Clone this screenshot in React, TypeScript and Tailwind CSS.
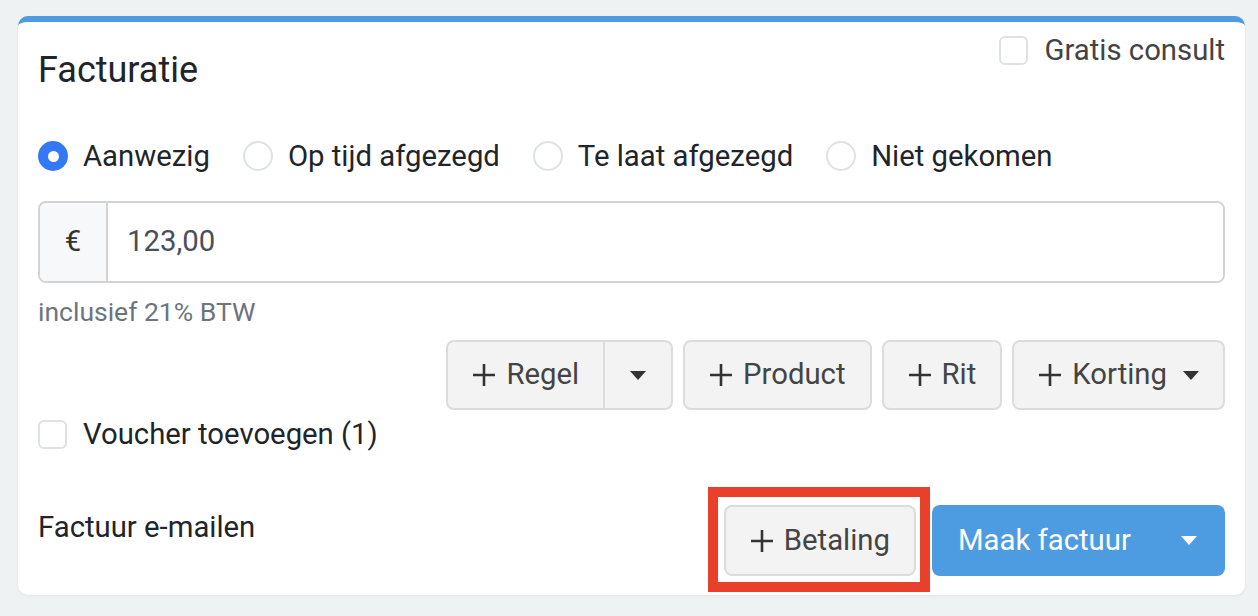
import { useState } from 'react';

const options = ['Aanwezig', 'Op tijd afgezegd', 'Te laat afgezegd', 'Niet gekomen'];

function PlusIcon() {
  return (
    <svg width="24" height="24" viewBox="0 0 24 24" className="shrink-0">
      <path d="M12 1v22M1 12h22" stroke="#333" strokeWidth="2.6" />
    </svg>
  );
}

function Caret({ color = '#333' }: { color?: string }) {
  return (
    <svg width="16" height="9" viewBox="0 0 16 9" className="shrink-0">
      <path d="M0 0h16L8 9z" fill={color} />
    </svg>
  );
}

function Checkbox({ label, className = '' }: { label: string; className?: string }) {
  return (
    <label className={`flex items-center gap-4 leading-[40px] ${className}`}>
      <span className="w-[29px] h-[29px] rounded-[6px] border-2 border-[#dee2e6] bg-white shrink-0" />
      {label}
    </label>
  );
}

const btn =
  'h-[70px] flex items-center rounded-[8px] border-2 border-[#dcdcdc] bg-[#f3f3f3] text-[#444]';

export default function App() {
  const [selected, setSelected] = useState(0);

  return (
    <div className="min-h-screen bg-[#eff2f3] pt-4 pl-[18px] pr-[13px] font-[Roboto,sans-serif] text-[29.3px] text-[#212529]">
      <div className="bg-white rounded-[10px] border-t-[6px] border-[#4d9be0] shadow-[0_1px_3px_rgba(0,0,0,0.06)] px-5 pb-[19px]">
        <div className="flex justify-between items-start">
          <h2 className="mt-[28px] text-[36px] leading-[40px] text-[#212529]">Facturatie</h2>
          <Checkbox label="Gratis consult" className="mt-[8px] text-[#444]" />
        </div>

        <div className="mt-[46px] flex items-center leading-[40px]">
          {options.map((o, i) => (
            <button
              key={o}
              onClick={() => setSelected(i)}
              className="flex items-center gap-[15px] mr-[33px]"
            >
              {selected === i ? (
                <span className="w-[30px] h-[30px] rounded-full bg-[#3478f6] flex items-center justify-center">
                  <span className="w-[11px] h-[11px] rounded-full bg-white" />
                </span>
              ) : (
                <span className="w-[30px] h-[30px] rounded-full border-2 border-[#dee2e6] bg-white" />
              )}
              {o}
            </button>
          ))}
        </div>

        <div className="mt-[25px] flex h-[82px] rounded-[8px] border-2 border-[#d3d3d3] overflow-hidden">
          <div className="w-[68px] bg-[#f7f8f9] border-r-2 border-[#d3d3d3] flex items-center justify-center text-[#333]">
            €
          </div>
          <input
            readOnly
            defaultValue="123,00"
            className="flex-1 pl-[19px] outline-none text-[#495057] bg-white"
          />
        </div>

        <p className="mt-[13px] text-[26.5px] leading-[32px] text-[#6c757d]">inclusief 21% BTW</p>

        <div className="mt-[12px] flex justify-end gap-[10px]">
          <div className={`${btn} overflow-hidden`}>
            <span className="flex items-center gap-[10px] pl-6 pr-[24px] h-full">
              <PlusIcon />
              Regel
            </span>
            <span className="h-full w-[68px] border-l-2 border-[#dcdcdc] flex items-center justify-center">
              <Caret />
            </span>
          </div>
          <button className={`${btn} gap-[10px] px-6`}>
            <PlusIcon />
            Product
          </button>
          <button className={`${btn} gap-[10px] px-6`}>
            <PlusIcon />
            Rit
          </button>
          <button className={`${btn} gap-[10px] pl-6 pr-[24px]`}>
            <PlusIcon />
            Korting
            <span className="ml-[6px]">
              <Caret />
            </span>
          </button>
        </div>

        <Checkbox label="Voucher toevoegen (1)" className="mt-[4px]" />

        <div className="mt-[51px] flex items-start justify-between">
          <span className="mt-[2px] leading-[40px]">Factuur e-mailen</span>
          <div className="flex gap-4">
            <div className="relative">
              <button className={`${btn} h-[71px] gap-[10px] px-6`}>
                <PlusIcon />
                Betaling
              </button>
              <span className="absolute -left-[16px] -right-[14px] -top-[18px] -bottom-[16px] border-[10px] border-[#e8402a] pointer-events-none" />
            </div>
            <button className="h-[71px] w-[293px] flex items-center justify-between rounded-[8px] bg-[#4d9be0] text-white pl-[26px] pr-[28px]">
              Maak factuur
              <Caret color="#fff" />
            </button>
          </div>
        </div>
      </div>
    </div>
  );
}
